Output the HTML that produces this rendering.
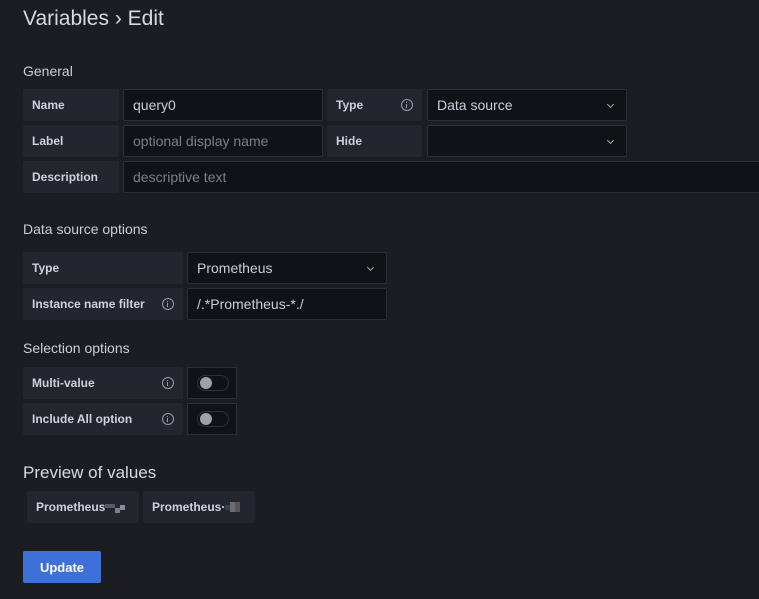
<!DOCTYPE html>
<html><head><style>
*{box-sizing:border-box;margin:0;padding:0}
body{width:759px;height:599px;overflow:hidden;background:#1b1d22;font-family:"Liberation Sans",sans-serif;color:#ccccdc;position:relative}
.a{position:absolute}
.t{font-size:21px;left:23px;top:7px;color:#d8d9e3}
.h{font-size:14px;color:#ccccdc}
.lb{background:#23262d;border-radius:2px;font-size:12px;font-weight:bold;color:#d0d1dc;padding-left:9px;display:flex;align-items:center;height:32px}
.in{background:#111217;border:1px solid #2c2f35;border-radius:2px;font-size:14px;padding-left:9px;display:flex;align-items:center;height:32px;color:#ccccdc}
.ph{color:#7d7f87}
.i{position:absolute;right:9px;top:10px;width:12px;height:12px;border:1.3px solid #9a9ca3;border-radius:50%}
.i:after{content:"";position:absolute;left:3.7px;top:4px;width:1.5px;height:4px;background:#9a9ca3}
.i:before{content:"";position:absolute;left:3.7px;top:1.5px;width:1.5px;height:1.5px;background:#9a9ca3}
.chev{position:absolute;right:13px;top:12px;width:5px;height:5px;border-right:1.3px solid #aaa;border-bottom:1.3px solid #aaa;transform:rotate(45deg)}
.sw{background:#111217;border:1px solid #2c2f35;height:32px;width:50px}
.sw div{position:absolute;left:9px;top:7px;width:32px;height:16px;border:1px solid #2f323a;border-radius:8px}
.sw div:after{content:"";position:absolute;left:2px;top:1px;width:12px;height:12px;border-radius:50%;background:#9fa0a8}
.chip{background:#23262d;border-radius:3px;height:32px;font-size:12px;font-weight:bold;color:#d0d1dc;padding-left:9px;display:flex;align-items:center}
.px{display:inline-block;width:5px;height:5px}
</style></head><body>
<div class="a t">Variables › Edit</div>
<div class="a h" style="left:23px;top:63px">General</div>
<div class="a lb" style="left:23px;top:89px;width:96px">Name</div>
<div class="a in" style="left:123px;top:89px;width:200px">query0</div>
<div class="a lb" style="left:327px;top:89px;width:95px">Type<span class="i"></span></div>
<div class="a in" style="left:427px;top:89px;width:200px">Data source<span class="chev"></span></div>
<div class="a lb" style="left:23px;top:125px;width:96px">Label</div>
<div class="a in ph" style="left:123px;top:125px;width:200px"><span class="ph">optional display name</span></div>
<div class="a lb" style="left:327px;top:125px;width:95px">Hide</div>
<div class="a in" style="left:427px;top:125px;width:200px"><span class="chev"></span></div>
<div class="a lb" style="left:23px;top:161px;width:96px">Description</div>
<div class="a in" style="left:123px;top:161px;width:660px"><span class="ph">descriptive text</span></div>

<div class="a h" style="left:23px;top:221px">Data source options</div>
<div class="a lb" style="left:23px;top:252px;width:160px">Type</div>
<div class="a in" style="left:187px;top:252px;width:200px">Prometheus<span class="chev"></span></div>
<div class="a lb" style="left:23px;top:288px;width:160px">Instance name filter<span class="i"></span></div>
<div class="a in" style="left:187px;top:288px;width:200px">/.*Prometheus-*./</div>

<div class="a h" style="left:23px;top:340px">Selection options</div>
<div class="a lb" style="left:23px;top:367px;width:160px">Multi-value<span class="i"></span></div>
<div class="a sw" style="left:187px;top:367px"><div></div></div>
<div class="a lb" style="left:23px;top:403px;width:160px">Include All option<span class="i"></span></div>
<div class="a sw" style="left:187px;top:403px"><div></div></div>

<div class="a" style="left:23px;top:463px;font-size:17px;color:#d8d9e3">Preview of values</div>
<div class="a chip" style="left:27px;top:491px;width:112px">Prometheus<span class="px" style="background:#555a66;width:10px;height:4px;margin-top:-3px"></span><span class="px" style="background:#7a7d88;margin-top:6px"></span><span class="px" style="background:#8a8d99"></span></div>
<div class="a chip" style="left:143px;top:491px;width:112px">Prometheus·<span class="px" style="background:#3a3e48"></span><span class="px" style="background:#6a6d77;height:10px"></span><span class="px" style="background:#5a5550;height:10px"></span></div>

<div class="a" style="left:23px;top:551px;width:78px;height:32px;background:#3d71d9;border-radius:2px;color:#fff;font-size:13px;font-weight:bold;display:flex;align-items:center;justify-content:center">Update</div>
</body></html>
